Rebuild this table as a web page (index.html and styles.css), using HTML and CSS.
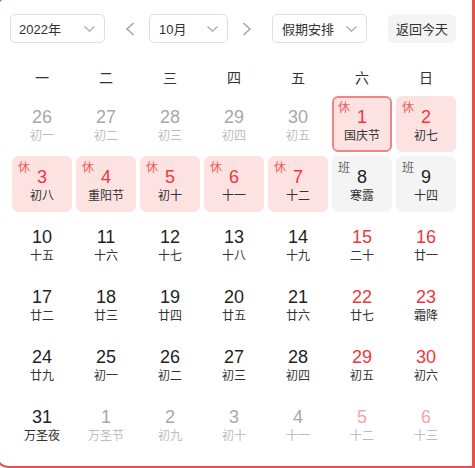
FILE: index.html
```html
<!DOCTYPE html>
<html lang="zh-CN">
<head>
<meta charset="utf-8">
<title>日历</title>
<link rel="stylesheet" href="styles.css">
</head>
<body>
<div class="frame">
  <div class="toolbar">
    <div class="select sel-year"><span>2022年</span><svg class="chev" width="11" height="6" viewBox="0 0 11 6"><polyline points="0.5,0.5 5.5,5.3 10.5,0.5"/></svg></div>
    <button class="arrow arrow-prev"><svg width="10" height="14" viewBox="0 0 10 14"><polyline points="8.5,1 2,7 8.5,13"/></svg></button>
    <div class="select sel-month"><span>10月</span><svg class="chev" width="11" height="6" viewBox="0 0 11 6"><polyline points="0.5,0.5 5.5,5.3 10.5,0.5"/></svg></div>
    <button class="arrow arrow-next"><svg width="10" height="14" viewBox="0 0 10 14"><polyline points="1.5,1 8,7 1.5,13"/></svg></button>
    <div class="select sel-holiday"><span>假期安排</span><svg class="chev" width="11" height="6" viewBox="0 0 11 6"><polyline points="0.5,0.5 5.5,5.3 10.5,0.5"/></svg></div>
    <button class="today-btn">返回今天</button>
  </div>

  <div class="weekdays">
    <div>一</div><div>二</div><div>三</div><div>四</div><div>五</div><div>六</div><div>日</div>
  </div>

  <div class="grid">
    <div class="cell other"><div class="num">26</div><div class="lunar">初一</div></div>
    <div class="cell other"><div class="num">27</div><div class="lunar">初二</div></div>
    <div class="cell other"><div class="num">28</div><div class="lunar">初三</div></div>
    <div class="cell other"><div class="num">29</div><div class="lunar">初四</div></div>
    <div class="cell other"><div class="num">30</div><div class="lunar">初五</div></div>
    <div class="cell rest selected"><span class="tag">休</span><div class="num">1</div><div class="lunar">国庆节</div></div>
    <div class="cell rest"><span class="tag">休</span><div class="num">2</div><div class="lunar">初七</div></div>

    <div class="cell rest"><span class="tag">休</span><div class="num">3</div><div class="lunar">初八</div></div>
    <div class="cell rest"><span class="tag">休</span><div class="num">4</div><div class="lunar">重阳节</div></div>
    <div class="cell rest"><span class="tag">休</span><div class="num">5</div><div class="lunar">初十</div></div>
    <div class="cell rest"><span class="tag">休</span><div class="num">6</div><div class="lunar">十一</div></div>
    <div class="cell rest"><span class="tag">休</span><div class="num">7</div><div class="lunar">十二</div></div>
    <div class="cell work"><span class="tag">班</span><div class="num">8</div><div class="lunar">寒露</div></div>
    <div class="cell work"><span class="tag">班</span><div class="num">9</div><div class="lunar">十四</div></div>

    <div class="cell"><div class="num">10</div><div class="lunar">十五</div></div>
    <div class="cell"><div class="num">11</div><div class="lunar">十六</div></div>
    <div class="cell"><div class="num">12</div><div class="lunar">十七</div></div>
    <div class="cell"><div class="num">13</div><div class="lunar">十八</div></div>
    <div class="cell"><div class="num">14</div><div class="lunar">十九</div></div>
    <div class="cell weekend"><div class="num">15</div><div class="lunar">二十</div></div>
    <div class="cell weekend"><div class="num">16</div><div class="lunar">廿一</div></div>

    <div class="cell"><div class="num">17</div><div class="lunar">廿二</div></div>
    <div class="cell"><div class="num">18</div><div class="lunar">廿三</div></div>
    <div class="cell"><div class="num">19</div><div class="lunar">廿四</div></div>
    <div class="cell"><div class="num">20</div><div class="lunar">廿五</div></div>
    <div class="cell"><div class="num">21</div><div class="lunar">廿六</div></div>
    <div class="cell weekend"><div class="num">22</div><div class="lunar">廿七</div></div>
    <div class="cell weekend"><div class="num">23</div><div class="lunar">霜降</div></div>

    <div class="cell"><div class="num">24</div><div class="lunar">廿九</div></div>
    <div class="cell"><div class="num">25</div><div class="lunar">初一</div></div>
    <div class="cell"><div class="num">26</div><div class="lunar">初二</div></div>
    <div class="cell"><div class="num">27</div><div class="lunar">初三</div></div>
    <div class="cell"><div class="num">28</div><div class="lunar">初四</div></div>
    <div class="cell weekend"><div class="num">29</div><div class="lunar">初五</div></div>
    <div class="cell weekend"><div class="num">30</div><div class="lunar">初六</div></div>

    <div class="cell"><div class="num">31</div><div class="lunar">万圣夜</div></div>
    <div class="cell other"><div class="num">1</div><div class="lunar">万圣节</div></div>
    <div class="cell other"><div class="num">2</div><div class="lunar">初九</div></div>
    <div class="cell other"><div class="num">3</div><div class="lunar">初十</div></div>
    <div class="cell other"><div class="num">4</div><div class="lunar">十一</div></div>
    <div class="cell other weekend"><div class="num">5</div><div class="lunar">十二</div></div>
    <div class="cell other weekend"><div class="num">6</div><div class="lunar">十三</div></div>
  </div>
</div>
</body>
</html>
```

FILE: styles.css
```css
html, body {
  margin: 0;
  padding: 0;
  background: #fff;
  overflow: hidden;
}

body {
  font-family: "Liberation Sans", "Noto Sans CJK SC", sans-serif;
  color: #222;
}

.frame {
  box-sizing: border-box;
  margin: -4px 0 0 -4px;
  width: 479px;
  height: 472px;
  border: 2px solid #ee4b4b;
  border-right-width: 3px;
  border-radius: 12px 0 0 12px;
  padding: 16px 0 0 12px;
}

.toolbar {
  display: flex;
  align-items: center;
  height: 29px;
}

.select {
  box-sizing: border-box;
  height: 29px;
  display: flex;
  align-items: center;
  justify-content: space-between;
  padding: 0 9px 0 8px;
  border: 1px solid #dcdfe6;
  border-radius: 5px;
  font-size: 13px;
  color: #303133;
  background: #fff;
}

.sel-year { width: 95px; }
.sel-month { width: 79px; margin-left: 11px; padding-left: 9px; }
.sel-holiday { width: 95px; margin-left: 17px; padding-left: 9px; }

.chev polyline {
  fill: none;
  stroke: #a8abb2;
  stroke-width: 1.2;
}

.arrow {
  width: 16px;
  height: 29px;
  padding: 0;
  border: 0;
  background: transparent;
  display: flex;
  align-items: center;
  justify-content: center;
}

.arrow-prev { margin-left: 17px; }
.arrow-next { margin-left: 11px; }

.arrow polyline {
  fill: none;
  stroke: #a0a3aa;
  stroke-width: 1.5;
}

.today-btn {
  box-sizing: border-box;
  margin-left: 21px;
  height: 29px;
  padding: 0 8px;
  border: 0;
  border-radius: 6px;
  background: #f4f4f5;
  font-family: "Liberation Sans", "Noto Sans CJK SC", sans-serif;
  font-size: 13px;
  color: #303133;
}

.weekdays {
  display: grid;
  grid-template-columns: repeat(7, 60px);
  column-gap: 4px;
  margin: 17px 0 0 2px;
  height: 36px;
  align-items: center;
  font-size: 14px;
  color: #333;
}

.weekdays div {
  text-align: center;
  line-height: 36px;
}

.grid {
  display: grid;
  grid-template-columns: repeat(7, 60px);
  grid-auto-rows: 56px;
  gap: 4px;
  margin-left: 2px;
}

.cell {
  position: relative;
  box-sizing: border-box;
  border-radius: 6px;
  padding-top: 10px;
  text-align: center;
}

.num {
  font-size: 18px;
  line-height: 22px;
  color: #1f1f1f;
}

.lunar {
  font-size: 12px;
  line-height: 16px;
  color: #333;
}

.weekend .num { color: #f2353c; }

.other .num { color: #a8a8a8; }
.other .lunar { color: #bdbdbd; }
.other.weekend .num { color: #fba3a3; }

.rest { background: #fde2e2; }
.rest .num { color: #f2353c; }

.work { background: #f4f4f5; }

.selected {
  border: 2px solid #f08585;
  padding-top: 8px;
}

.tag {
  position: absolute;
  top: 4px;
  left: 6px;
  font-size: 12px;
  line-height: 16px;
}

.rest .tag { color: #f25c5c; }
.work .tag { color: #666; }
.selected .tag { top: 2px; left: 4px; }
```
